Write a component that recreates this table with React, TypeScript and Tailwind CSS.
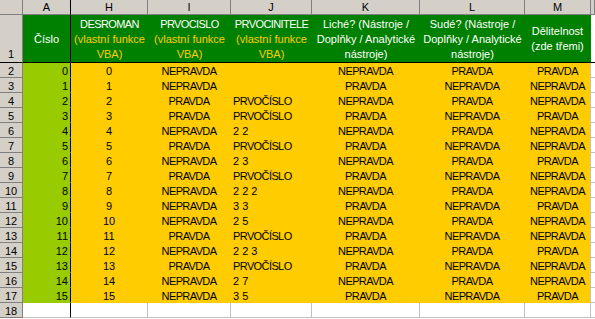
const font = { fontFamily: '"Liberation Sans", Arial, sans-serif' };

type Row = [number, string, string, string, string, string];

// [číslo, I, J, K, L, M]  (H repeats the number)
const rows: Row[] = [
  [0, "NEPRAVDA", "", "NEPRAVDA", "PRAVDA", "PRAVDA"],
  [1, "NEPRAVDA", "", "PRAVDA", "NEPRAVDA", "NEPRAVDA"],
  [2, "PRAVDA", "PRVOČÍSLO", "NEPRAVDA", "PRAVDA", "NEPRAVDA"],
  [3, "PRAVDA", "PRVOČÍSLO", "PRAVDA", "NEPRAVDA", "PRAVDA"],
  [4, "NEPRAVDA", "2 2", "NEPRAVDA", "PRAVDA", "NEPRAVDA"],
  [5, "PRAVDA", "PRVOČÍSLO", "PRAVDA", "NEPRAVDA", "NEPRAVDA"],
  [6, "NEPRAVDA", "2 3", "NEPRAVDA", "PRAVDA", "PRAVDA"],
  [7, "PRAVDA", "PRVOČÍSLO", "PRAVDA", "NEPRAVDA", "NEPRAVDA"],
  [8, "NEPRAVDA", "2 2 2", "NEPRAVDA", "PRAVDA", "NEPRAVDA"],
  [9, "NEPRAVDA", "3 3", "PRAVDA", "NEPRAVDA", "PRAVDA"],
  [10, "NEPRAVDA", "2 5", "NEPRAVDA", "PRAVDA", "NEPRAVDA"],
  [11, "PRAVDA", "PRVOČÍSLO", "PRAVDA", "NEPRAVDA", "NEPRAVDA"],
  [12, "NEPRAVDA", "2 2 3", "NEPRAVDA", "PRAVDA", "PRAVDA"],
  [13, "PRAVDA", "PRVOČÍSLO", "PRAVDA", "NEPRAVDA", "NEPRAVDA"],
  [14, "NEPRAVDA", "2 7", "NEPRAVDA", "PRAVDA", "NEPRAVDA"],
  [15, "NEPRAVDA", "3 5", "PRAVDA", "NEPRAVDA", "PRAVDA"],
];

const letters = ["A", "H", "I", "J", "K", "L", "M"];

const hdr = "bg-[#d4d0c8] border-r border-b border-[#808080] text-center leading-[14px] text-black";
const yellow = "bg-[#ffcc00] border-r border-b border-[#ffcc00] pt-[2px] leading-[13px] text-black whitespace-nowrap";
const caps = "tracking-[-0.6px]";

function GreenHead({ title, sub, last }: { title: string[]; sub?: string[]; last?: boolean }) {
  return (
    <div
      className={`flex flex-col justify-center items-center pt-[1px] bg-[#008000] border-b border-black text-center leading-[15px] ${
        last ? "border-r border-r-[#008000]" : ""
      }`}
    >
      {title.map((t) => (
        <span key={t} className={`text-white ${t === t.toUpperCase() ? caps : ""}`}>
          {t}
        </span>
      ))}
      {sub?.map((t) => (
        <span key={t} className="text-[#ffcc00]">
          {t}
        </span>
      ))}
    </div>
  );
}

export default function App() {
  return (
    <div className="w-[595px] h-[319px] overflow-hidden bg-white text-[11px]" style={font}>
      <div className="grid grid-cols-[23px_48px_77px_83px_81px_108px_105px_66px_1fr] grid-rows-[15px_48px_repeat(17,15px)]">
        {/* column headers */}
        <div className={hdr} />
        {letters.map((l) => (
          <div key={l} className={`${hdr} ${l === "A" ? "border-r-black" : ""}`}>
            {l}
          </div>
        ))}
        <div className={hdr} />

        {/* row 1 */}
        <div className={`${hdr} flex items-end justify-center pb-[1px] border-b-black`}>1</div>
        <div className="flex items-center justify-center pt-[1px] bg-[#008000] border-r border-b border-black text-white">
          Číslo
        </div>
        <GreenHead title={["DESROMAN"]} sub={["(vlastní funkce", "VBA)"]} />
        <GreenHead title={["PRVOCISLO"]} sub={["(vlastní funkce", "VBA)"]} />
        <GreenHead title={["PRVOCINITELE"]} sub={["(vlastní funkce", "VBA)"]} />
        <GreenHead title={["Liché? (Nástroje /", "Doplňky / Analytické", "nástroje)"]} />
        <GreenHead title={["Sudé? (Nástroje /", "Doplňky / Analytické", "nástroje)"]} />
        <GreenHead title={["Dělitelnost", "(zde třemi)"]} last />
        <div className="bg-white border-b border-black" />

        {/* data rows */}
        {rows.map(([n, i, j, k, l, m], idx) => (
          <div key={n} className="contents">
            <div className={`${hdr} pt-[1px] leading-[13px]`}>{idx + 2}</div>
            <div className="bg-[#99cc00] border-r border-b border-r-black border-b-[#99cc00] pr-[2px] pt-[2px] leading-[13px] text-right text-black">
              {n}
            </div>
            <div className={`${yellow} text-center`}>{n}</div>
            <div className={`${yellow} ${caps} text-center`}>{i}</div>
            <div className={`${yellow} ${j.startsWith("P") ? caps : ""} text-left pl-[2px]`}>{j}</div>
            <div className={`${yellow} ${caps} text-center`}>{k}</div>
            <div className={`${yellow} ${caps} text-center`}>{l}</div>
            <div className={`${yellow} ${caps} text-center border-r-[#c0c0c0]`}>{m}</div>
            <div className="bg-white border-b border-[#c0c0c0]" />
          </div>
        ))}

        {/* row 18 */}
        <div className={`${hdr} pt-[1px] leading-[13px]`}>18</div>
        <div className="bg-white border-r border-b border-r-black border-b-[#c0c0c0]" />
        {[0, 1, 2, 3, 4, 5].map((c) => (
          <div key={c} className="bg-white border-r border-b border-[#c0c0c0]" />
        ))}
        <div className="bg-white border-b border-[#c0c0c0]" />
      </div>
    </div>
  );
}
